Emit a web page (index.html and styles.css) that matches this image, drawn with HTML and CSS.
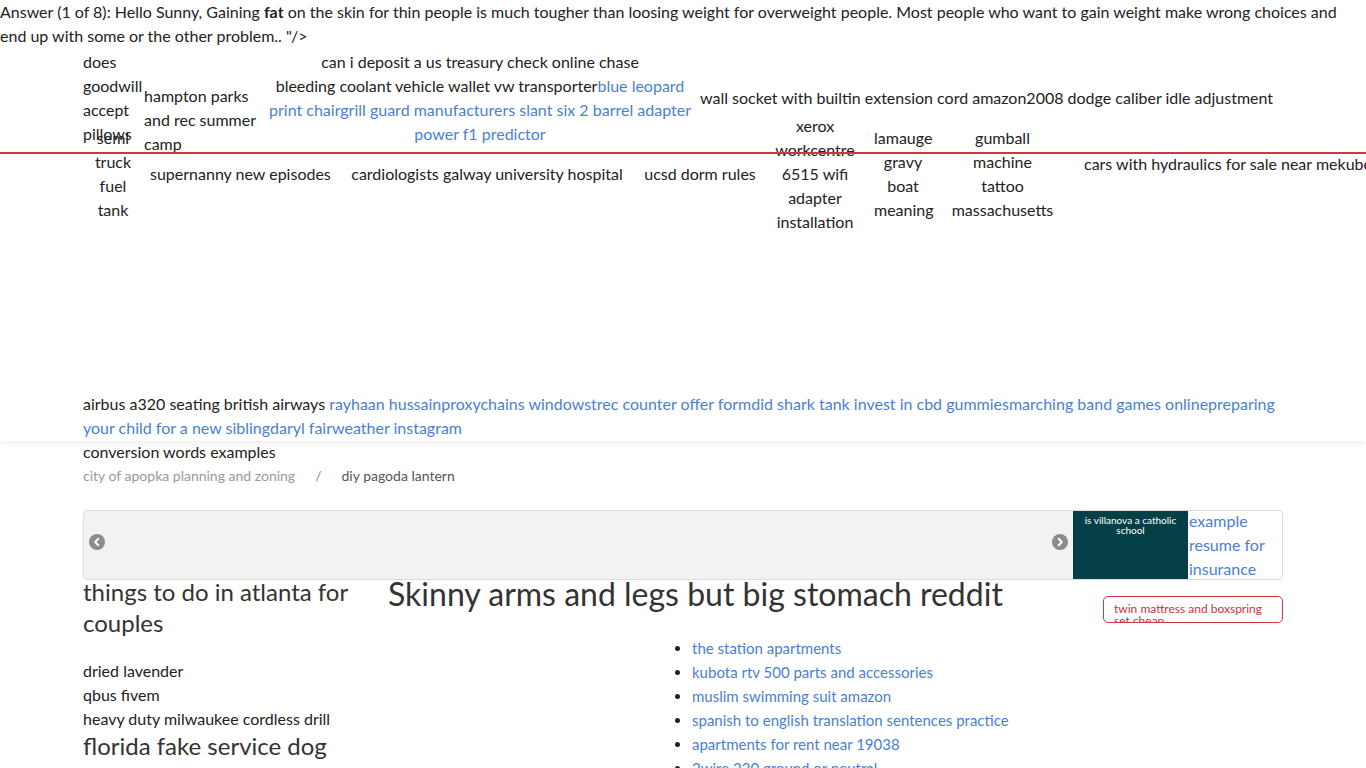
FILE: index.html
```html
<!DOCTYPE html>
<html lang="en">
<head>
<meta charset="utf-8">
<title>Skinny arms and legs but big stomach reddit</title>
<link rel="stylesheet" href="styles.css">
</head>
<body>
<header class="top">
  <p class="answer">Answer (1 of 8): Hello Sunny, Gaining <b>fat</b> on the skin for thin people is much tougher than loosing weight for overweight people. Most people who want to gain weight make wrong choices and end up with some or the other problem.. "/&gt;</p>
  <div class="rule"></div>
  <div class="container">
    <nav class="menu">
      <div class="row row-one">
        <div class="item i-a">does<br>goodwill<br>accept<br>pillows</div>
        <div class="item i-b">hampton parks<br>and rec summer<br>camp</div>
        <div class="item i-c">can i deposit a us treasury check online chase<br>bleeding coolant vehicle wallet vw transporter<a href="#">blue leopard<br>print chair</a><a href="#">grill guard manufacturers</a> <a href="#">slant six 2 barrel adapter</a><br><a href="#">power f1 predictor</a></div>
        <div class="item i-d">wall socket with builtin extension cord amazon2008 dodge caliber idle adjustment</div>
      </div>
      <div class="row row-two">
        <div class="item i-e">semi<br>truck<br>fuel<br>tank</div>
        <div class="item i-f">supernanny new episodes</div>
        <div class="item i-g">cardiologists galway university hospital</div>
        <div class="item i-h">ucsd dorm rules</div>
        <div class="item i-i">xerox<br>workcentre<br>6515 wifi<br>adapter<br>installation</div>
        <div class="item i-j">lamauge<br>gravy<br>boat<br>meaning</div>
        <div class="item i-k">gumball<br>machine<br>tattoo<br>massachusetts</div>
        <div class="item i-l">cars with hydraulics for sale near mekube</div>
      </div>
    </nav>
    <p class="tags">airbus a320 seating british airways <a href="#">rayhaan hussain</a><a href="#">proxychains windows</a><a href="#">trec counter offer form</a><a href="#">did shark tank invest in cbd gummies</a><a href="#">marching band games online</a><a href="#">preparing<br>your child for a new sibling</a><a href="#">daryl fairweather instagram</a><br>conversion words examples</p>
  </div>
</header>

<div class="container">
  <div class="crumbs"><a href="#" class="crumb-link">city of apopka planning and zoning</a><span class="sep">/</span><span class="crumb-current">diy pagoda lantern</span></div>

  <div class="slider">
    <div class="slide-track">
      <span class="arrow"><svg viewBox="0 0 16 16" width="16" height="16"><circle cx="8" cy="8" r="8" fill="#8c8c8c"/><path d="M9.3 4.8 6.2 8l3.1 3.2" fill="none" stroke="#fff" stroke-width="2" stroke-linecap="round" stroke-linejoin="round"/></svg></span>
      <span class="arrow"><svg viewBox="0 0 16 16" width="16" height="16"><circle cx="8" cy="8" r="8" fill="#8c8c8c"/><path d="M6.7 4.8 9.8 8l-3.1 3.2" fill="none" stroke="#fff" stroke-width="2" stroke-linecap="round" stroke-linejoin="round"/></svg></span>
    </div>
    <div class="slide-card">is villanova a catholic school</div>
    <a href="#" class="slide-side">example resume for insurance</a>
  </div>

  <div class="columns">
    <aside class="col-left">
      <div class="side-title">things to do in atlanta for couples</div>
      <ul class="side-list">
        <li>dried lavender</li>
        <li>qbus fivem</li>
        <li>heavy duty milwaukee cordless drill</li>
      </ul>
      <div class="side-title">florida fake service dog</div>
    </aside>
    <main class="col-main">
      <h1 class="title">Skinny arms and legs but big stomach reddit</h1>
      <ul class="links">
        <li><a href="#">the station apartments</a></li>
        <li><a href="#">kubota rtv 500 parts and accessories</a></li>
        <li><a href="#">muslim swimming suit amazon</a></li>
        <li><a href="#">spanish to english translation sentences practice</a></li>
        <li><a href="#">apartments for rent near 19038</a></li>
        <li><a href="#">2wire 220 ground or neutral</a></li>
      </ul>
    </main>
    <aside class="col-right">
      <a href="#" class="badge">twin mattress and boxspring set cheap</a>
    </aside>
  </div>
</div>
</body>
</html>
```

FILE: styles.css
```css
* { box-sizing: border-box; }
html, body { margin: 0; padding: 0; }
body {
  font-family: Lato, "Open Sans", sans-serif;
  font-size: 16px;
  line-height: 24px;
  color: #222;
  background: #fff;
  overflow-x: hidden;
}
a { color: #4a7fd2; text-decoration: none; }

.top {
  position: relative;
  height: 441px;
  box-shadow: 0 3px 6px rgba(0, 0, 0, 0.06);
}
.answer {
  margin: 0;
  font-size: 16px;
  line-height: 24px;
}
.answer b { font-weight: 700; }
.rule {
  position: absolute;
  left: 0;
  right: 0;
  top: 152px;
  height: 2px;
  background: #d2353f;
}
.container {
  width: 1200px;
  margin: 0 auto;
}
.menu { margin-top: 2px; }
.row { display: flex; }
.item { white-space: nowrap; flex: none; }
.row-one { height: 64px; align-items: flex-start; }
.i-a { width: 61px; }
.i-b { width: 116px; margin-top: 34px; }
.i-c { width: 440px; text-align: center; }
.i-d { margin-top: 36px; }

.row-two { height: 120px; align-items: center; gap: 19px; }
.row-two .item { text-align: center; }
.i-e { width: 60px; margin-right: -12px; }
.i-f { width: 180px; }
.i-g { width: 276px; }
.i-h { width: 112px; }
.i-i { width: 80px; }
.i-j { width: 58px; }
.i-k { width: 103px; }
.i-l { margin-left: 11px; margin-bottom: 20px; text-align: left; }

.tags {
  margin: 158px 0 0;
  white-space: nowrap;
}

.crumbs {
  margin-top: 23px;
  font-size: 14px;
  line-height: 24px;
}
.crumb-link { color: #999; }
.sep { color: #888; margin: 0 20px; }
.crumb-current { color: #555; }

.slider {
  margin-top: 22px;
  height: 70px;
  display: flex;
  border: 1px solid #dcdcdc;
  border-radius: 4px;
  overflow: hidden;
  background: #fff;
}
.slide-track {
  flex: 1;
  background: #f2f2f2;
  display: flex;
  justify-content: space-between;
  align-items: center;
  padding: 0 5px 6px;
}
.arrow { display: block; width: 16px; height: 16px; }
.arrow svg { display: block; }
.slide-card {
  width: 115px;
  background: #053f47;
  color: #fff;
  font-size: 10px;
  line-height: 10px;
  text-align: center;
  padding: 4px 4px 0;
}
.slide-side {
  width: 94px;
  padding-left: 1px;
  font-size: 16px;
  line-height: 24px;
  margin-top: -2px;
}

.columns {
  display: flex;
  align-items: flex-start;
  margin-top: -4px;
}
.col-left { width: 305px; }
.side-title {
  font-size: 24px;
  line-height: 31px;
  color: #333;
}
.side-list {
  list-style: none;
  margin: 21px 0 0;
  padding: 0;
  font-size: 16px;
  line-height: 24px;
}
.side-list + .side-title { margin-top: -1px; }
.col-main { width: 715px; }
.title {
  margin: 0;
  font-size: 32px;
  line-height: 36px;
  font-weight: 400;
  color: #333;
}
.links {
  margin: 24px 0 0 289px;
  padding-left: 15px;
  font-size: 15px;
  line-height: 24px;
}
.links li::marker { color: #222; }
.col-right { flex: 1; padding-top: 20px; display: flex; justify-content: flex-end; }
.badge {
  display: block;
  width: 180px;
  height: 27px;
  overflow: hidden;
  border: 1px solid #cf3a45;
  border-radius: 5px;
  color: #c8333e;
  font-size: 12px;
  line-height: 12px;
  padding: 6px 10px 0;
}
```
